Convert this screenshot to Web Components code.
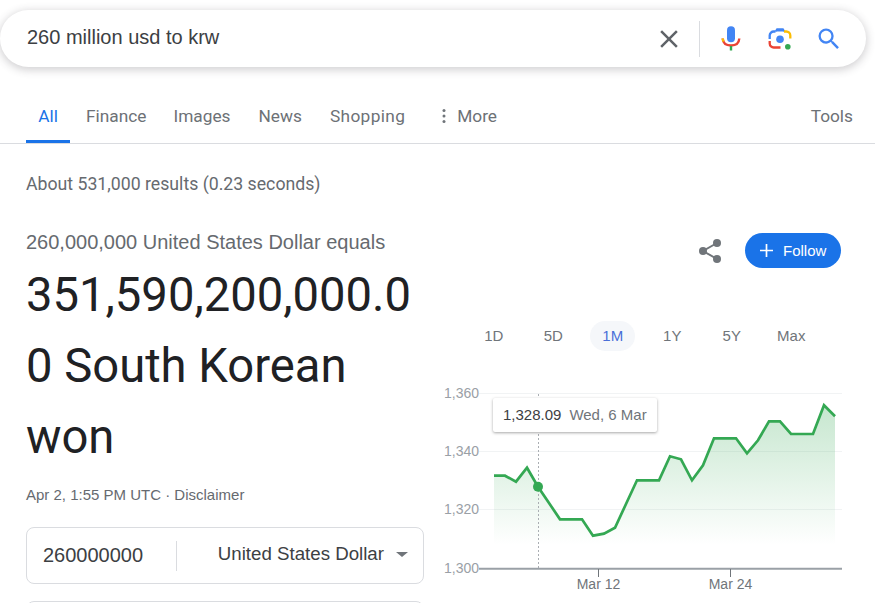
<!DOCTYPE html>
<html><head><meta charset="utf-8"><style>
html,body{margin:0;padding:0;background:#fff;height:603px;overflow:hidden;font-family:"Liberation Sans",Arial,sans-serif}
</style></head><body>
<g-page></g-page>
<script>
function def(name, html){
  customElements.define(name, class extends HTMLElement{
    constructor(){super();this.attachShadow({mode:'open'}).innerHTML=html;}
  });
}
def('g-searchbar',`<style>
:host{display:flex;align-items:center;box-sizing:border-box;width:866px;height:57px;margin-top:10px;border-radius:29px;background:#fff;box-shadow:0 2px 8px 1px rgba(64,60,67,.24);padding-left:27px;color:#202124}
.q{flex:1;font:20px/26px "Liberation Sans",Arial,sans-serif;color:#3c4043;margin-top:-4px}
.icons{display:flex;align-items:center}
svg{display:block}
.sep{width:1px;height:36px;background:#dadce0;margin:0 19px 0 18px}
</style>
<div class="q">260 million usd to krw</div>
<div class="icons">
<svg width="24" height="24" viewBox="0 0 24 24"><path fill="#5f6368" d="M19 6.410 17.590 5 12 10.590 6.410 5 5 6.410 10.590 12 5 17.590 6.410 19 12 13.410 17.590 19 19 17.590 13.410 12z" transform="translate(-3 -3) scale(1.25)"/></svg>
<div class="sep"></div>
<svg width="24" height="30" viewBox="0 0 24 30"><rect x="8" y="2.200" width="8" height="16" rx="4" fill="#4285f4"/><path d="M3.700 14.500c.3 4.500 3.500 7 8.300 7s8-2.500 8.300-7" fill="none" stroke="#ea4335" stroke-width="2.400"/><path d="M3.700 14.500c.07 1.100.35 2.100.8 3" fill="none" stroke="#fbbc04" stroke-width="2.400"/><rect x="10.800" y="22" width="2.400" height="4.500" fill="#34a853"/></svg>
<svg style="margin-left:24px" width="26" height="26" viewBox="0 0 26 26"><path d="M8.500 5.500h-1.500a4 4 0 0 0-4.300 4v3.500" fill="none" stroke="#4285f4" stroke-width="2.300"/><path d="M8.500 5.500 10 3h6L17.500 5.500" fill="#4285f4" stroke="#4285f4" stroke-width="1.500"/><path d="M17 5.500h2.300a4 4 0 0 1 4 4v3" fill="none" stroke="#fbbc04" stroke-width="2.300"/><path d="M2.700 15v2.500a4 4 0 0 0 4.300 4h6.500" fill="none" stroke="#ea4335" stroke-width="2.300"/><circle cx="13" cy="13.300" r="3.800" fill="#4285f4"/><circle cx="20.800" cy="20.800" r="2.800" fill="#34a853"/></svg>
<svg style="margin-left:22px;margin-right:23px" width="28" height="28" viewBox="0 0 24 24"><path fill="#4285f4" d="M15.500 14h-.79l-.28-.27A6.471 6.471 0 0 0 16 9.500 6.500 6.500 0 1 0 9.500 16c1.610 0 3.090-.59 4.230-1.570l.27.28v.79l5 4.990L20.490 19l-4.990-5zm-6 0C7.010 14 5 11.990 5 9.500S7.010 5 9.500 5 14 7.010 14 9.500 11.990 14 9.500 14z"/></svg>
</div>`);
def('g-tab',`<style>
:host{display:flex;align-items:center;justify-content:center;box-sizing:border-box;height:46px;padding:0 0 6px;border-bottom:3px solid transparent;font:17.300px/22px Roboto,sans-serif;color:#6d7176}
:host([active]){color:#1a73e8;border-bottom-color:#1a73e8}
</style><slot></slot>`);
def('g-tabs',`<style>
:host{display:flex;align-items:flex-end;box-sizing:border-box;height:77px;border-bottom:1px solid #dadce0;padding-left:26px;padding-right:22px}
.all{width:44px;margin-right:16px}
g-tab{margin-right:28px}
.more svg{display:block;margin-right:10px}
.spacer{flex:1}
</style>
<g-tab class="all" active>All</g-tab>
<g-tab style="margin-right:27px">Finance</g-tab><g-tab>Images</g-tab><g-tab style="margin-right:28px">News</g-tab><g-tab style="margin-right:36px;letter-spacing:.35px">Shopping</g-tab>
<g-tab class="more"><svg width="6" height="16" viewBox="0 0 6 16"><circle cx="3" cy="2.500" r="1.500" fill="#70757a"/><circle cx="3" cy="8" r="1.500" fill="#70757a"/><circle cx="3" cy="13.500" r="1.500" fill="#70757a"/></svg><span>More</span></g-tab>
<div class="spacer"></div>
<g-tab style="margin-right:0">Tools</g-tab>`);
def('g-stats',`<style>:host{display:block;padding:29px 0 0 26px;font:17.700px/22px Roboto,sans-serif;color:#666a6f;height:22px}</style><slot></slot>`);
def('g-result',`<style>
:host{display:block;width:398px;margin-left:26px}
.eq{font:20px/24px "Liberation Sans",Arial,sans-serif;color:#666a6f;margin-top:-3px}
.big{font:47.200px/71px Roboto,sans-serif;color:#202124;overflow-wrap:anywhere;margin-top:6px}
.date{font:15px/20px "Liberation Sans",Arial,sans-serif;color:#666a6f;margin-top:12px}
.box{display:flex;align-items:center;box-sizing:border-box;height:57px;margin-top:22px;border:1px solid #dadce0;border-radius:8px;font:18.700px/24px "Liberation Sans",Arial,sans-serif;color:#3c4043}
.num{width:149px;box-sizing:border-box;padding-left:16px;font-size:20px;white-space:nowrap;margin-top:-2px}
.div{width:1px;height:30px;background:#dadce0}
.cur{flex:1;text-align:right;padding-right:39px;position:relative;margin-top:-3px}
.arrow{position:absolute;right:15px;top:10px;width:0;height:0;border:6px solid transparent;border-top:5px solid #70757a;border-bottom:0}
.box2{height:57px;margin-top:17px;border:1px solid #dadce0;border-radius:8px}
</style>
<div class="eq">260,000,000 United States Dollar equals</div>
<div class="big">351,590,200,000.00 South Korean won</div>
<div class="date">Apr 2, 1:55 PM UTC · Disclaimer</div>
<div class="box"><div class="num">260000000</div><div class="div"></div><div class="cur">United States Dollar<span class="arrow"></span></div></div>
<div class="box2"></div>`);
def('g-follow',`<style>
:host{display:flex;align-items:center;justify-content:flex-end}
.share{display:block;margin-right:23px}
.btn{display:flex;align-items:center;box-sizing:border-box;width:96px;height:35px;border-radius:18px;background:#1a73e8;color:#fff;font:15px/20px "Liberation Sans",Arial,sans-serif;padding-left:14px}
.btn svg{display:block;margin-right:9px}
</style>
<svg class="share" width="24" height="26" viewBox="0 0 24 26"><g fill="#70757a"><circle cx="19" cy="5" r="4"/><circle cx="5" cy="13" r="4"/><circle cx="19" cy="21" r="4"/></g><path d="M19 5 5 13l14 8" fill="none" stroke="#70757a" stroke-width="2"/></svg>
<div class="btn"><svg width="15" height="15" viewBox="0 0 15 15"><path d="M7.500 1v13M1 7.500h13" stroke="#fff" stroke-width="1.700"/></svg><span>Follow</span></div>`);
def('g-ranges',`<style>
:host{display:flex;align-items:center;width:396px;height:30px;font:15px/30px "Liberation Sans",Arial,sans-serif;color:#70757a}
span{width:59.500px;text-align:center;height:30px}
span.on{color:#4a6fd8;position:relative}
span.on::before{content:"";position:absolute;left:7px;right:8px;top:0;bottom:0;border-radius:15px;background:#f5f7fa;z-index:-1}
.w{position:relative;z-index:0;display:flex}
</style>
<div class="w"><span>1D</span><span>5D</span><span class="on">1M</span><span>1Y</span><span>5Y</span><span>Max</span></div>`);
const pts=[[494,475.7],[505,475.7],[516,481.7],[527,467.7],[538,486.7],[549,503],[560,519.3],[582,519.3],[593,535.7],[604,533.7],[615,527.7],[626,504],[637,480.3],[659,480.3],[670,456.3],[681,459.3],[692,480.3],[703,465.3],[714,438.3],[736,438.3],[747,453.3],[758,440.3],[769,421.3],[780,421.3],[791,434],[813,434],[824,405.3],[835,416.3]];
const ox=440, oy=380;
const P=pts.map(p=>(p[0]-ox)+','+(p[1]-oy).toFixed(1)).join(' ');
def('g-chart',`<style>
:host{display:block;position:relative;width:435px;height:223px}
svg{display:block;font:14px "Liberation Sans",Arial,sans-serif}
.tip{position:absolute;left:53px;top:18px;width:164px;height:34px;box-sizing:border-box;background:#fff;border-radius:2px;box-shadow:0 1px 3px rgba(0,0,0,.35);display:flex;align-items:center;padding-left:10px;font:15px/20px "Liberation Sans",Arial,sans-serif;color:#3c4043;white-space:nowrap}
.tip i{font-style:normal;color:#70757a;margin-left:8px}
</style>
<svg width="435" height="223" viewBox="0 0 435 223">
<defs><linearGradient id="g" x1="0" y1="0" x2="0" y2="1"><stop offset="0" stop-color="#34a853" stop-opacity=".28"/><stop offset="1" stop-color="#34a853" stop-opacity="0"/></linearGradient></defs>
<g stroke="#f1f3f4" stroke-width="1"><path d="M39 13.500H402M39 71.500H402M39 129.500H402"/></g>
<polygon points="54,165 ${P} 395,165" fill="url(#g)"/>
<path d="M98.500 14V188" stroke="#aaaeb3" stroke-width="1" stroke-dasharray="2 2" fill="none"/>
<polyline points="${P}" fill="none" stroke="#34a853" stroke-width="2.700" stroke-linejoin="miter"/>
<circle cx="98" cy="106.700" r="5" fill="#34a853"/>
<path d="M39 188.800H402" stroke="#9aa0a6" stroke-width="2"/>
<path d="M158.500 189V197M290.500 189V197" stroke="#70757a" stroke-width="1"/>
<g fill="#9aa0a6"><text x="4" y="18">1,360</text><text x="4" y="76">1,340</text><text x="4" y="134">1,320</text><text x="4" y="193">1,300</text></g>
<g fill="#70757a" text-anchor="middle"><text x="158.500" y="209">Mar 12</text><text x="290.500" y="209">Mar 24</text></g>
</svg>
<div class="tip"><span>1,328.09</span><i>Wed, 6 Mar</i></div>`);
def('g-right',`<style>
:host{display:block;width:435px;margin-left:16px}
g-follow{margin-right:34px;height:35px}
g-ranges{margin:53px 0 0 24px}
g-chart{margin-top:29px}
</style>
<g-follow></g-follow><g-ranges></g-ranges><g-chart></g-chart>`);
def('g-page',`<style>
:host{display:block;width:875px;height:603px;overflow:hidden}
.main{display:flex;align-items:flex-start;margin-top:38px}
</style>
<g-searchbar></g-searchbar><g-tabs></g-tabs><g-stats>About 531,000 results (0.23 seconds)</g-stats>
<div class="main"><g-result></g-result><g-right></g-right></div>`);
</script>
</body></html>
